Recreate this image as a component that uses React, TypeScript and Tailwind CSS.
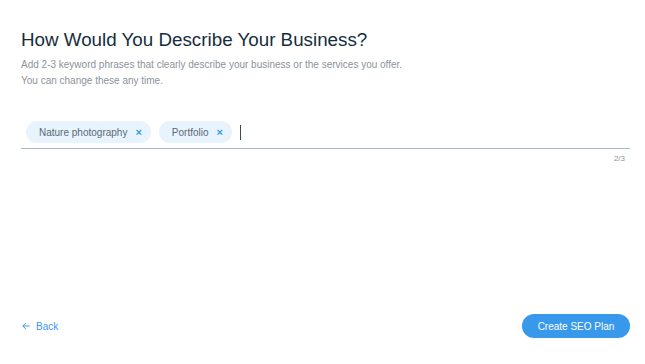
import { useState } from "react";

const initialKeywords = ["Nature photography", "Portfolio"];

export default function App() {
    const [keywords, setKeywords] = useState(initialKeywords);

    return (
        <div
            className="w-[645px] h-[364px] bg-white flex flex-col pl-[21px] pr-[15px] pt-[29px] pb-[26px]"
            style={{ fontFamily: '"Liberation Sans", Arial, sans-serif' }}
        >
            <h1 className="text-[18.8px] leading-[22px] text-[#162d3d]">
                How Would You Describe Your Business?
            </h1>
            <p className="mt-[6px] text-[10px] leading-[16px] text-[#8c939b]">
                Add 2-3 keyword phrases that clearly describe your business or the services you offer.
                <br />
                You can change these any time.
            </p>

            <div className="mt-[32px] flex items-center gap-2 pl-[5px] pb-[5px] border-b border-[#a8b9cb]">
                {keywords.map((keyword, index) => (
                    <span
                        key={index}
                        className="h-[22px] flex items-center gap-[8px] pl-[13px] pr-[9px] rounded-full bg-[#e7f4fe] text-[10px] text-[#5d6875]"
                    >
                        {keyword}
                        <button
                            className="text-[#3899ec] text-[11px] font-bold leading-none"
                            onClick={() => setKeywords(keywords.filter((_, i) => i !== index))}
                        >
                            ×
                        </button>
                    </span>
                ))}
                <span className="w-px h-[15px] bg-[#3c4a57]"></span>
            </div>
            <div className="mt-[4px] pr-[5px] text-right text-[8px] text-[#8c939b]">
                {keywords.length}/3
            </div>

            <div className="mt-auto flex items-center justify-between">
                <button className="flex items-center gap-[6px] pl-[1px] text-[10px] text-[#3899ec]">
                    <svg width="8" height="8" viewBox="0 0 8 8" fill="none" stroke="#3899ec" strokeWidth="1">
                        <path d="M7.5 4H0.8M3.8 1L0.8 4L3.8 7" />
                    </svg>
                    Back
                </button>
                <button className="h-[24px] w-[108px] rounded-full bg-[#3899ec] text-white text-[10px]">
                    Create SEO Plan
                </button>
            </div>
        </div>
    );
}
